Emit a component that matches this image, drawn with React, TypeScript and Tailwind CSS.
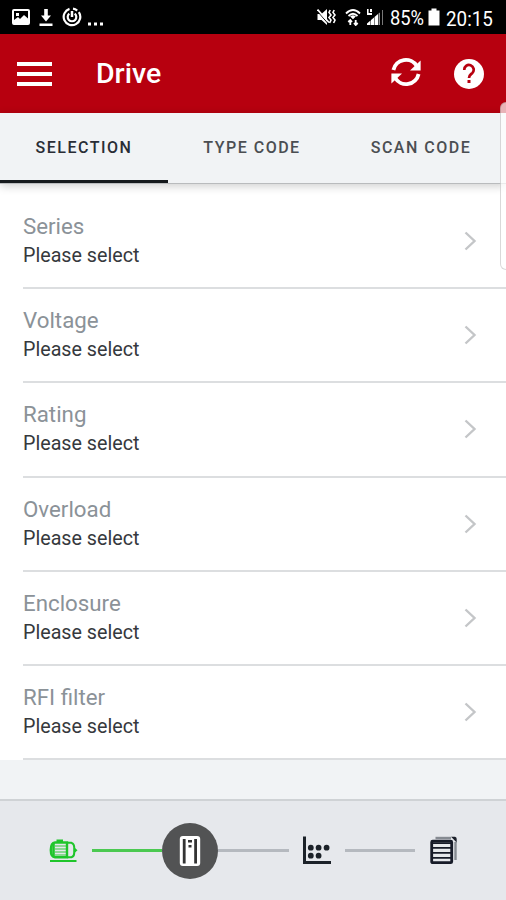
import { useState } from "react";

const FIELDS = ["Series", "Voltage", "Rating", "Overload", "Enclosure", "RFI filter"];
const TABS = ["SELECTION", "TYPE CODE", "SCAN CODE"];

function StatusBar() {
  return (
    <div className="flex h-[34px] shrink-0 items-center bg-black pl-[12px] pr-[12px] text-white">
      <svg width="18" height="16" viewBox="0 0 18 16" className="shrink-0">
        <rect x="1" y="1" width="16" height="14" rx="1" fill="none" stroke="#fff" strokeWidth="2" />
        <rect x="4" y="4" width="3" height="3" fill="#fff" />
        <path d="M2 13V11L6 8L8 10L12 6L16 9.5V14H2Z" fill="#fff" />
      </svg>
      <svg width="14" height="19" viewBox="0 0 14 19" className="ml-[9px] shrink-0" fill="#fff">
        <path d="M5.2 1H8.8V7.5H12L7 13.5L2 7.5H5.2Z" />
        <rect x="0.5" y="15.5" width="13" height="2.5" />
      </svg>
      <svg width="20" height="20" viewBox="0 0 20 20" className="ml-[9px] shrink-0" fill="none" stroke="#fff">
        <path d="M7.5 1.9A8.3 8.3 0 1 0 16.8 5.1M11 1.7A8.3 8.3 0 0 1 15.2 3.6" strokeWidth="2.2" />
        <path d="M7.3 6.6A4.3 4.3 0 1 0 12.7 6.6" strokeWidth="2.2" />
        <path d="M10 4V10" strokeWidth="2.5" />
      </svg>
      <svg width="17" height="4" viewBox="0 0 17 4" className="ml-[5px] mt-[13px] shrink-0" fill="#fff">
        <rect x="1" y="0.5" width="3" height="3" />
        <rect x="7" y="0.5" width="3" height="3" />
        <rect x="13" y="0.5" width="3" height="3" />
      </svg>

      <svg width="19" height="18" viewBox="0 0 19 18" className="ml-auto shrink-0">
        <path d="M0.5 6H4.5L10 1V17L4.5 12H0.5Z" fill="#fff" />
        <path d="M0 2.8L11 15.5" stroke="#000" strokeWidth="1" />
        <path d="M0.5 1.5L12 14.5" stroke="#fff" strokeWidth="1.8" />
        <path d="M13.2 2L12 4.5L14 7L12 9.5L14 12L12.6 15M17.2 2L16 4.5L18 7L16 9.5L18 12L16.6 15" fill="none" stroke="#fff" strokeWidth="1.6" />
      </svg>
      <svg width="16" height="18" viewBox="0 0 16 18" className="ml-[9px] shrink-0" fill="none" stroke="#fff">
        <path d="M1 5.5Q8 -1.5 15 5.5M3.5 8Q8 3.5 12.5 8" strokeWidth="1.8" />
        <path d="M8 11L5.5 8.5Q8 6.5 10.5 8.5Z" fill="#fff" strokeWidth="0.5" />
        <path d="M5.3 17V12M3.3 14L5.3 12L7 14M10.7 12V17M9 15L10.7 17L12.7 15" strokeWidth="1.8" />
      </svg>
      <svg width="18" height="18" viewBox="0 0 18 18" className="ml-[5px] shrink-0" fill="#fff">
        <path d="M1 1H2.6V5H6V7H1ZM4 1H6V4H4Z" />
        <path d="M1 15.5L4.5 12.5V17H1ZM5 12L8 9.5V17H5ZM8.5 9L12 6V17H8.5Z" />
        <path d="M12.5 5.5L14 4.5V17H12.5Z" fill="#999" />
        <rect x="16" y="2" width="1" height="15" fill="#777" />
      </svg>
      <span className="mt-[3px] ml-[6px] w-[36px] origin-left scale-x-[0.94] whitespace-nowrap text-[19.5px] leading-none">85%</span>
      <svg width="12" height="18" viewBox="0 0 12 18" className="ml-[2px] shrink-0" fill="#fff">
        <path d="M3.5 0.5H8.5V2.5H11.5V17.5H0.5V2.5H3.5Z" />
      </svg>
      <span className="mt-[3px] ml-[6px] w-[48px] origin-left scale-x-[0.94] whitespace-nowrap text-[20px] leading-none">20:15</span>
    </div>
  );
}

function Header() {
  return (
    <header className="flex h-[79px] shrink-0 items-center bg-[#b7000f] pl-[17px] pr-[22px] text-white">
      <button className="flex w-[35px] flex-col gap-[6px]" aria-label="Menu">
        <span className="h-[4px] w-full bg-white" />
        <span className="h-[4px] w-full bg-white" />
        <span className="h-[4px] w-full bg-white" />
      </button>
      <h1 className="mt-[2px] ml-[44px] text-[28.5px] leading-none font-medium">Drive</h1>
      <button className="ml-auto mb-[3px]" aria-label="Refresh">
        <svg width="32" height="32" viewBox="0 0 32 32" fill="none" stroke="#fff" strokeWidth="3.8">
          <path d="M3.4 14A12.8 12.8 0 0 1 26.8 10" />
          <path d="M28.6 18A12.8 12.8 0 0 1 5.2 22" />
          <path d="M30.6 4.5V14.5H20Z" fill="#fff" stroke="none" />
          <path d="M1.4 27.5V17.5H12Z" fill="#fff" stroke="none" />
        </svg>
      </button>
      <button className="ml-[32px] flex h-[30px] w-[30px] items-center justify-center rounded-full bg-white" aria-label="Help">
        <svg width="16" height="22" viewBox="0 0 16 22" fill="none">
          <path d="M3.3 7A4.7 4.7 0 1 1 11.4 9.9C9.5 11.7 8 12.2 8 15" stroke="#b7000f" strokeWidth="2.7" />
          <rect x="6.5" y="17" width="3" height="3" fill="#b7000f" />
        </svg>
      </button>
    </header>
  );
}

function Tabs() {
  const [active, setActive] = useState(0);

  return (
    <nav className="relative z-10 grid h-[71px] shrink-0 grid-cols-[168px_168px_170px] border-b border-[#b9bbbd] bg-[#f1f3f5] shadow-[0_2px_9px_rgba(0,0,0,0.2)]">
      {TABS.map((tab, i) => (
        <button
          key={tab}
          onClick={() => setActive(i)}
          className={
            i === active
              ? "border-b-[3px] border-[#15191c] pt-[2px] text-[16px] font-medium tracking-[1.5px] text-[#292d35]"
              : "border-b-[3px] border-transparent pt-[2px] text-[16px] font-medium tracking-[1.5px] text-[#4b4e52]"
          }
        >
          {tab}
        </button>
      ))}
    </nav>
  );
}

function FieldRow({ label }: { label: string }) {
  return (
    <li className="ml-[23px] flex h-[94.2px] items-center border-b-2 border-[#dcdee0] pr-[29px]">
      <div className="flex flex-1 flex-col">
        <span className="text-[22.3px] leading-[29px] text-[#8b9298]">{label}</span>
        <span className="text-[19.7px] leading-[29px] text-[#36393d]">Please select</span>
      </div>
      <svg width="14" height="20" viewBox="0 0 14 20" fill="none">
        <path d="M2.5 1.5L11.5 10L2.5 18.5" stroke="#c4c6c8" strokeWidth="2.4" />
      </svg>
    </li>
  );
}

function MotorIcon() {
  return (
    <svg width="30" height="24" viewBox="0 0 30 24" fill="none" stroke="#1fc52b">
      <path d="M6 3.5H18V18.2H6Q1.8 18 1.8 11Q1.8 4 6 3.5Z" strokeWidth="2.4" />
      <path d="M4.5 4.5V18M7.5 1.8H14" strokeWidth="2.6" />
      <path d="M6 7H17M6 10H17M6 13H17M6 16H17" strokeWidth="1.5" opacity="0.6" />
      <path d="M18.5 3.8H22.5Q25.2 5 25.2 8V14Q25.2 17.5 22.5 18.2H18.5" strokeWidth="2" />
      <path d="M25 8L28.5 11.2L25 14.4Z" fill="#1fc52b" stroke="none" />
      <path d="M1 22H27.5" strokeWidth="2" />
    </svg>
  );
}

function DriveIcon() {
  return (
    <svg width="22" height="32" viewBox="0 0 22 32">
      <rect x="0.8" y="1" width="20.4" height="30" rx="3" fill="#fff" />
      <rect x="3.8" y="4" width="2.8" height="24.5" fill="#333" />
      <rect x="15.2" y="4" width="2.8" height="24.5" fill="#333" />
      <rect x="9" y="5" width="4" height="2.5" fill="#333" />
      <rect x="9.5" y="10" width="3" height="2.5" fill="#333" />
    </svg>
  );
}

function ChartIcon() {
  return (
    <svg width="30" height="29" viewBox="0 0 30 29" fill="#1c2229">
      <path d="M1 0.5H4V25H29V28H1Z" />
      <circle cx="8.8" cy="11.7" r="2.9" />
      <circle cx="16.6" cy="11.7" r="2.9" />
      <circle cx="24.6" cy="11.7" r="2.9" />
      <circle cx="8.8" cy="19.7" r="2.9" />
      <circle cx="16.6" cy="19.7" r="2.9" />
    </svg>
  );
}

function ReportIcon() {
  return (
    <svg width="28" height="29" viewBox="0 0 28 29" fill="none">
      <path d="M5.5 2H21" stroke="#868b92" strokeWidth="2.4" />
      <path d="M25.5 6V24" stroke="#868b92" strokeWidth="2.4" />
      <path d="M21 0.8H25Q26.7 1 26.7 3V6.5Z" fill="#1c202b" />
      <rect x="1.7" y="5.2" width="20" height="21.5" rx="1" stroke="#171b28" strokeWidth="2.8" />
      <path d="M2 7.2H22M2 11.8H22M2 16.8H22M2 21.8H22" stroke="#171b28" strokeWidth="1.8" />
    </svg>
  );
}

function StepBar() {
  return (
    <footer className="flex h-[101px] shrink-0 items-center border-t-2 border-[#cfd2d5] bg-[#e6e8ec] pl-[49px]">
      <MotorIcon />
      <span className="ml-[13px] h-[3px] w-[70px] bg-[#4bc951]" />
      <span className="flex h-[56px] w-[56px] items-center justify-center rounded-full bg-[#525354]">
        <DriveIcon />
      </span>
      <span className="h-[3px] w-[71px] bg-[#b5b9bf]" />
      <span className="ml-[13px]">
        <ChartIcon />
      </span>
      <span className="ml-[13px] h-[3px] w-[70px] bg-[#b5b9bf]" />
      <span className="ml-[15px]">
        <ReportIcon />
      </span>
    </footer>
  );
}

export default function App() {
  return (
    <div className="relative flex h-[900px] w-[506px] flex-col overflow-hidden bg-[#f1f3f5] font-[Roboto,sans-serif]">
      <StatusBar />
      <Header />
      <Tabs />
      <ul className="bg-white pt-[11px]">
        {FIELDS.map((label) => (
          <FieldRow key={label} label={label} />
        ))}
      </ul>
      <div className="flex-1" />
      <StepBar />
      {/* edge panel handle */}
      <div className="absolute top-[102px] -right-[6px] z-20 h-[168px] w-[12px] rounded-[6px] border border-black/15 bg-white/70" />
    </div>
  );
}
